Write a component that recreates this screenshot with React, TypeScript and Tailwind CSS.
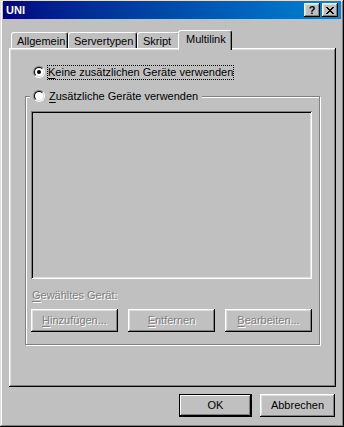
import React from 'react';

const raised = "shadow-[inset_-1px_-1px_#000,inset_1px_1px_#fff,inset_-2px_-2px_#808080,inset_2px_2px_#dfdfdf]";
const disabledText = "text-[#808080] [text-shadow:1px_1px_0_#fff]";

const Radio = ({ checked }: { checked?: boolean }) => (
    <div className="w-[12px] h-[12px] rounded-full border border-[#808080] border-r-white border-b-white shrink-0">
        <div className="w-full h-full rounded-full border border-black border-r-[#dfdfdf] border-b-[#dfdfdf] bg-white flex items-center justify-center">
            {checked && <div className="w-[4px] h-[4px] rounded-full bg-black" />}
        </div>
    </div>
);

const Mn = ({ c }: { c: string }) => <span className="underline underline-offset-[2px]">{c}</span>;

const App = () => {
    const tabs = [
        { label: "Allgemein", w: "w-[57px]" },
        { label: "Servertypen", w: "w-[69px]" },
        { label: "Skript", w: "w-[43px]" },
    ];

    return (
        <div className="w-[344px] h-[427px] bg-[#c0c0c0] pt-[1px] px-[3px] shadow-[inset_-1px_-1px_#000,inset_1px_1px_#dfdfdf,inset_-2px_-2px_#808080,inset_2px_2px_#fff] text-[11px] leading-[13px] text-black overflow-hidden"
            style={{ fontFamily: '"Liberation Sans", Arial, sans-serif' }}>
            {/* title bar */}
            <div className="h-[18px] flex items-center justify-between pl-[3px] pr-[3px] bg-gradient-to-r from-[#000080] to-[#1084d0]">
                <span className="text-white font-bold text-[11px]">UNI</span>
                <div className="flex gap-[2px]">
                    <div className={`w-[16px] h-[14px] bg-[#c0c0c0] ${raised} flex items-center justify-center font-bold text-[11px] leading-none`}>?</div>
                    <div className={`w-[16px] h-[14px] bg-[#c0c0c0] ${raised} flex items-center justify-center`}>
                        <svg width="8" height="7" viewBox="0 0 8 7" shapeRendering="crispEdges">
                            <path d="M0 0h2v1h-2zM6 0h2v1h-2zM1 1h2v1h-2zM5 1h2v1h-2zM2 2h4v1h-4zM3 3h2v1h-2zM2 4h4v1h-4zM1 5h2v1h-2zM5 5h2v1h-2zM0 6h2v1h-2zM6 6h2v1h-2z" fill="#000" />
                        </svg>
                    </div>
                </div>
            </div>

            <div className="ml-[6px] w-[327px] mt-[11px]">
                {/* tabs */}
                <div className="h-[18px] flex items-end pl-[2px]">
                    {tabs.map((t) => (
                        <div key={t.label} className={`${t.w} h-[16px] border-l border-t border-white border-r border-r-black rounded-t-[3px] shadow-[inset_-1px_0_#808080] flex items-center pl-[5px] pt-[1px]`}>
                            {t.label}
                        </div>
                    ))}
                    <div className="relative z-10 -ml-[2px] w-[54px] h-[20px] -mb-[2px] bg-[#c0c0c0] border-l border-t border-white border-r border-r-black rounded-t-[3px] shadow-[inset_-1px_0_#808080] flex items-start pt-[2px] pl-[7px]">
                        Multilink
                    </div>
                </div>

                {/* panel */}
                <div className="h-[339px] shadow-[inset_-1px_-1px_#000,inset_1px_1px_#fff,inset_-2px_-2px_#808080,inset_2px_2px_#dfdfdf] pt-[16px] pl-[16px]">
                    <div className="flex items-center h-[16px] pl-[8px]">
                        <Radio checked />
                        <span className="ml-[2px] px-[1px] py-[1px] whitespace-nowrap outline-1 outline-dotted outline-black -outline-offset-1">
                            <Mn c="K" />eine zusätzlichen Geräte verwenden
                        </span>
                    </div>

                    {/* group box */}
                    <div className="mt-[16px] w-[295px] h-[249px] border border-[#808080] shadow-[inset_1px_1px_#fff,1px_1px_#fff] flex flex-col">
                        <div className="-mt-[9px] ml-[4px] self-start bg-[#c0c0c0] h-[16px] flex items-center px-[3px] gap-[4px] pr-[4px] whitespace-nowrap">
                            <Radio />
                            <span><Mn c="Z" />usätzliche Geräte verwenden</span>
                        </div>
                        <div className="mt-[7px] ml-[5px] w-[281px] h-[168px] bg-[#c0c0c0] shadow-[inset_1px_1px_#808080,inset_-1px_-1px_#fff,inset_2px_2px_#000,inset_-2px_-2px_#dfdfdf]" />
                        <div className={`mt-[10px] ml-[6px] ${disabledText}`}>
                            <Mn c="G" />ewähltes Gerät:
                        </div>
                        <div className="mt-[7px] ml-[5px] w-[281px] flex justify-between">
                            {[["H", "inzufügen..."], ["E", "ntfernen"], ["B", "earbeiten..."]].map(([m, rest]) => (
                                <div key={rest} className={`w-[87px] h-[23px] ${raised} flex items-center justify-center ${disabledText}`}>
                                    <span><Mn c={m} />{rest}</span>
                                </div>
                            ))}
                        </div>
                    </div>
                </div>

                {/* footer */}
                <div className="mt-[7px] flex justify-end gap-[8px] pr-[1px]">
                    <div className="w-[73px] h-[23px] shadow-[inset_0_0_0_1px_#000,inset_-2px_-2px_#000,inset_2px_2px_#fff,inset_-3px_-3px_#808080] flex items-center justify-center">
                        OK
                    </div>
                    <div className={`w-[75px] h-[23px] ${raised} flex items-center justify-center`}>
                        Abbrechen
                    </div>
                </div>
            </div>
        </div>
    );
};

export default App;
